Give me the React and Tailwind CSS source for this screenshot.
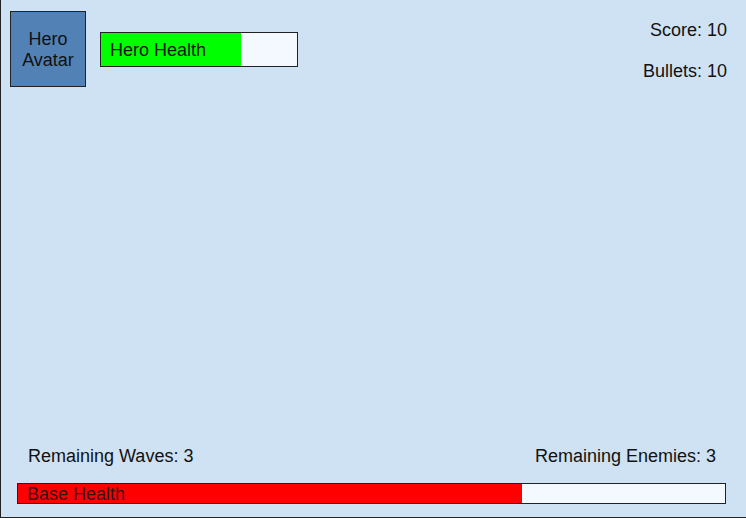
import React from 'react'

const font = { fontFamily: '"Liberation Sans", Arial, sans-serif' }

function Bar({ label, pct, fill, className, textClass }) {
  return (
    <div className={`relative border border-[#222] bg-[#f3f9fe] ${className}`}>
      <div className={`h-full ${fill}`} style={{ width: pct + '%' }} />
      <span className={`absolute left-[9px] top-px bottom-0 flex items-center ${textClass}`}>{label}</span>
    </div>
  )
}

export default function App() {
  return (
    <div
      className="w-[746px] h-[518px] bg-[#cfe2f3] border-l border-b border-[#222] flex flex-col text-[#111]"
      style={font}
    >
      {/* Top HUD */}
      <div className="flex items-start pl-[9px] pt-[11px] pr-[19px]">
        <div className="w-[76px] h-[76px] pt-[2px] bg-[#5181b5] border border-[#222] flex items-center justify-center text-center text-[18px] leading-[21px]">
          Hero<br />Avatar
        </div>
        <Bar
          label="Hero Health"
          pct={71.5}
          fill="bg-[#00ff00]"
          className="ml-[14px] mt-[21px] w-[198px] h-[35px]"
          textClass="text-[18px]"
        />
        <div className="ml-auto flex flex-col items-end text-[18px] leading-[20px]">
          <div className="mt-[9px]">Score: 10</div>
          <div className="mt-[21px]">Bullets: 10</div>
        </div>
      </div>

      <div className="flex-1" />

      {/* Bottom HUD */}
      <div className="flex justify-between pl-[27px] pr-[30px] text-[18px] leading-[20px]">
        <span>Remaining Waves: 3</span>
        <span>Remaining Enemies: 3</span>
      </div>
      <div className="px-[16px] mt-[17px] mb-[13px]">
        <Bar
          label="Base Health"
          pct={71.3}
          fill="bg-[#ff0000]"
          className="w-[709px] h-[21px]"
          textClass="text-[18px] text-[#3a1010]"
        />
      </div>
    </div>
  )
}
